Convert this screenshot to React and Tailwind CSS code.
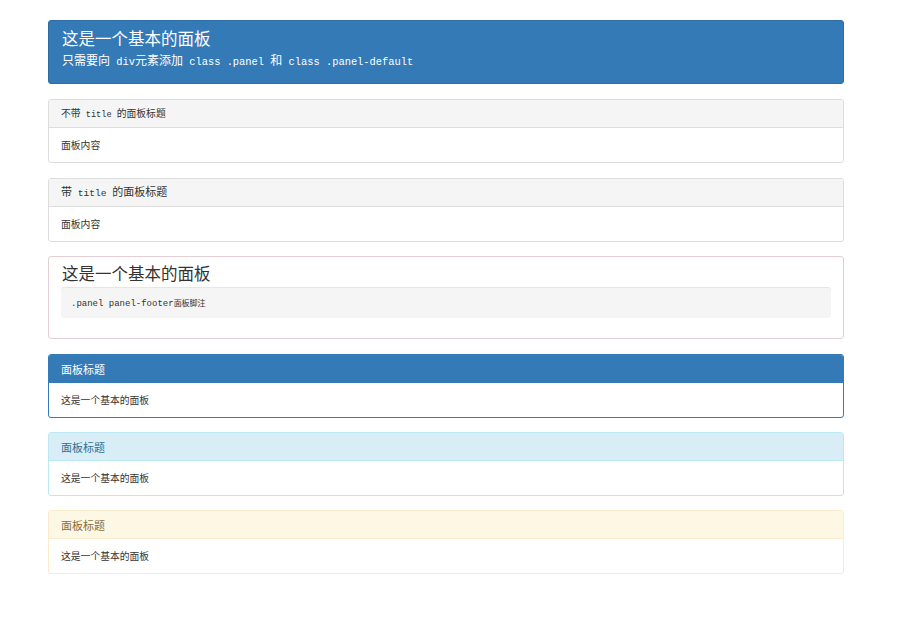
import React from "react";

function Mixed({ text, latin }) {
  const parts = text.split(/([\u3000-\u9fff]+)/).filter((p) => p.length > 0);
  return (
    <span>
      {parts.map((p, i) =>
        /[\u3000-\u9fff]/.test(p) ? (
          <span key={i}>{p}</span>
        ) : (
          <span key={i} className={latin}>
            {p}
          </span>
        )
      )}
    </span>
  );
}

const CJK = "font-['Noto_Sans_CJK_SC',sans-serif]";

function Panel({ border, headBg, headText, headBorder, title, titleSize, titleLatin, body, last }) {
  return (
    <div className={`rounded-[3px] border ${border} bg-white overflow-hidden ${last}`}>
      <div className={`h-[28px] border-b ${headBorder} ${headBg} ${headText} pl-[12px] flex items-center ${titleSize} leading-[14px] whitespace-pre`}>
        <Mixed text={title} latin={titleLatin} />
      </div>
      <div className="h-[34px] pl-[12px] flex items-center text-[9.8px] leading-[14px] text-[#333]">
        <span>{body}</span>
      </div>
    </div>
  );
}

export default function App() {
  return (
    <div className={`w-[916px] h-[628px] bg-white pt-[20px] pl-[48px] ${CJK}`}>
      <div className="w-[796px] flex flex-col">
        <div className="h-[64px] mb-[15px] rounded-[3px] bg-[#337ab7] border border-[#2e6da4] px-[13px] pt-[7px] text-white">
          <div className="text-[16.5px] leading-[20px] whitespace-pre">这是一个基本的面板</div>
          <div className="mt-[4px] text-[12px] leading-[16px] whitespace-pre">
            <Mixed
              text="只需要向 div元素添加 class .panel 和 class .panel-default"
              latin="font-['Liberation_Mono',monospace] text-[10.4px]"
            />
          </div>
        </div>

        <Panel
          border="border-[#ddd]"
          headBg="bg-[#f5f5f5]"
          headText="text-[#333]"
          headBorder="border-[#ddd]"
          title="不带 title 的面板标题"
          titleSize="text-[9.8px]"
          titleLatin="font-['Liberation_Mono',monospace] text-[8.6px]"
          body="面板内容"
          last="mb-[15px]"
        />
        <Panel
          border="border-[#ddd]"
          headBg="bg-[#f5f5f5]"
          headText="text-[#333]"
          headBorder="border-[#ddd]"
          title="带 title 的面板标题"
          titleSize="text-[11px]"
          titleLatin="font-['Liberation_Mono',monospace] text-[9.6px]"
          body="面板内容"
          last="mb-[14px]"
        />

        <div className="h-[83px] mb-[15px] rounded-[3px] border border-[#e3cfd3] bg-white px-[12px] pt-[6px]">
          <div className="text-[16.5px] leading-[20px] text-[#333] whitespace-pre pl-[1px]">这是一个基本的面板</div>
          <div className="mt-[4px] h-[31px] rounded-[3px] bg-[#f5f5f5] border-t border-[#e6e6e6] pl-[10px] flex items-center text-[8px] leading-[12px] text-[#333] whitespace-pre">
            <Mixed text=".panel panel-footer面板脚注" latin="font-['Liberation_Mono',monospace] text-[9px]" />
          </div>
        </div>

        <Panel
          border="border-[#337ab7]"
          headBg="bg-[#337ab7]"
          headText="text-white"
          headBorder="border-[#337ab7]"
          title="面板标题"
          titleSize="text-[11px]"
          titleLatin=""
          body="这是一个基本的面板"
          last="mb-[14px]"
        />
        <Panel
          border="border-[#bce8f1]"
          headBg="bg-[#d9edf7]"
          headText="text-[#31708f]"
          headBorder="border-[#bce8f1]"
          title="面板标题"
          titleSize="text-[11px]"
          titleLatin=""
          body="这是一个基本的面板"
          last="mb-[14px]"
        />
        <Panel
          border="border-[#faebcc]"
          headBg="bg-[#fcf8e3]"
          headText="text-[#8a6d3b]"
          headBorder="border-[#faebcc]"
          title="面板标题"
          titleSize="text-[11px]"
          titleLatin=""
          body="这是一个基本的面板"
          last=""
        />
      </div>
    </div>
  );
}
